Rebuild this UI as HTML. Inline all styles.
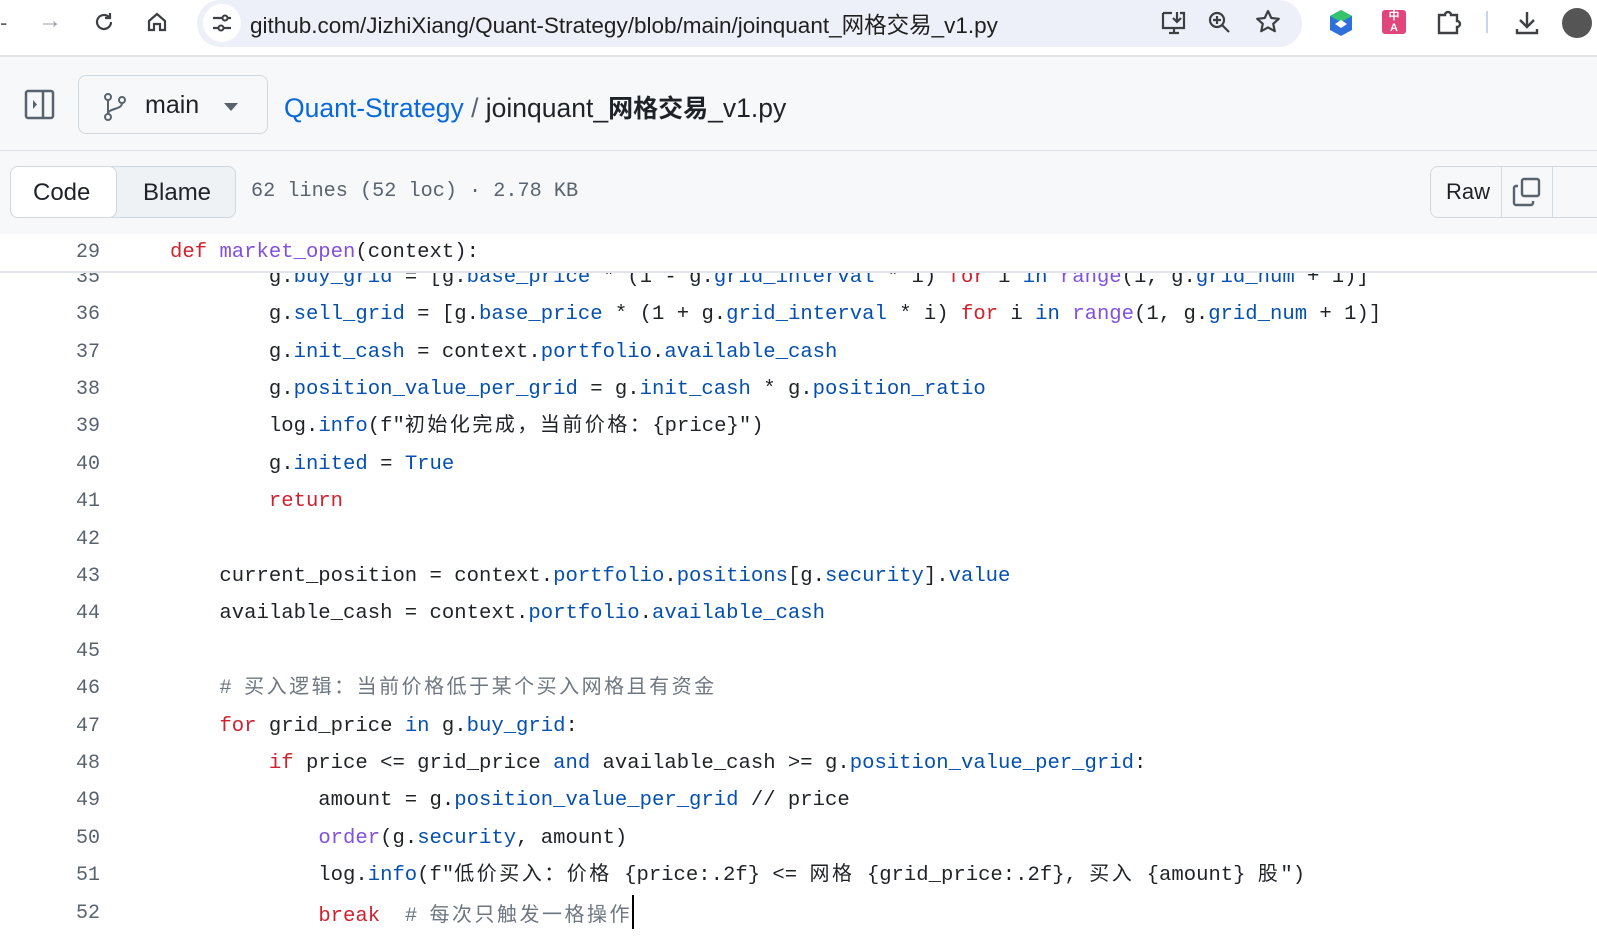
<!DOCTYPE html>
<html><head><meta charset="utf-8"><style>
*{margin:0;padding:0;box-sizing:border-box}
body{width:1597px;height:940px;overflow:hidden;background:#fff;font-family:"Liberation Sans","Noto Sans CJK SC",sans-serif;color:#1f2328;position:relative}
.abs{position:absolute}
.top{left:0;top:0;width:1597px;height:57px;background:#fff;border-bottom:2px solid #e3e3e3}
.url{left:197px;top:0;width:1105px;height:47px;background:#edf0f8;border-radius:24px}
.urltxt{left:250px;top:8px;font-size:22.5px;color:#1f1f1f;white-space:nowrap}
.hdr{left:0;top:57px;width:1597px;height:94px;background:#f6f8fa;border-bottom:1px solid #d8dee4}
.bar{left:0;top:151px;width:1597px;height:83px;background:#f6f8fa}
.btn{border:1px solid #d1d9e0;border-radius:8px;background:#f6f8fa}
.code{font-family:"Liberation Mono","Noto Sans CJK SC",monospace;font-size:20.6px;white-space:pre;color:#1f2328}
.ln{position:absolute;left:40px;width:60px;text-align:right;color:#59636e;font-family:"Liberation Mono",monospace;font-size:20px;line-height:37.4px;height:37.4px}
.l{position:absolute;left:170px;line-height:37.4px;height:37.4px}
.k{color:#cf222e}.f{color:#8250df}.a{color:#0550ae}.c{color:#6e7781}
.z{font-family:"Noto Sans CJK SC",sans-serif;font-size:20px;letter-spacing:2.5px;line-height:1}
</style></head><body>
<div class="abs top"></div>
<div class="abs" style="left:0;top:10px;font-size:22px;color:#5f6368">-</div>
<div class="abs" style="left:38px;top:7px;font-size:24px;color:#9aa0a6">→</div>
<svg class="abs" style="left:92px;top:10px" width="24" height="24" viewBox="0 0 24 24"><path d="M19 12a7 7 0 1 1-2.1-5" fill="none" stroke="#3c4043" stroke-width="2.2"/><path d="M18 3v5h-5" fill="none" stroke="#3c4043" stroke-width="2.2"/></svg>
<svg class="abs" style="left:145px;top:10px" width="24" height="24" viewBox="0 0 24 24"><path d="M4 11l8-7 8 7v9h-5v-6h-6v6H4z" fill="none" stroke="#3c4043" stroke-width="2.2"/></svg>
<div class="abs url"></div>
<div class="abs" style="left:203px;top:4px;width:38px;height:38px;background:#fff;border-radius:50%"></div>
<svg class="abs" style="left:210px;top:12px" width="24" height="22" viewBox="0 0 24 22"><path d="M3 6h10M3 16h6M17 6h4M13 16h8" stroke="#3c4043" stroke-width="2.2"/><circle cx="15" cy="6" r="2.5" fill="none" stroke="#3c4043" stroke-width="2"/><circle cx="11" cy="16" r="2.5" fill="none" stroke="#3c4043" stroke-width="2"/></svg>
<div class="abs urltxt">github.com/JizhiXiang/Quant-Strategy/blob/main/joinquant_网格交易_v1.py</div>
<svg class="abs" style="left:1160px;top:10px" width="28" height="26" viewBox="0 0 28 26"><path d="M3 3h9M20 3h4v15H3V3M9 23h10M14 18v5M17 2v9M13 8l4 4 4-4" fill="none" stroke="#3c4043" stroke-width="2.2"/></svg>
<svg class="abs" style="left:1207px;top:10px" width="26" height="26" viewBox="0 0 26 26"><circle cx="10" cy="10" r="7" fill="none" stroke="#3c4043" stroke-width="2.2"/><path d="M15 15l7 7M10 6v8M6 10h8" stroke="#3c4043" stroke-width="2.2"/></svg>
<svg class="abs" style="left:1255px;top:9px" width="26" height="26" viewBox="0 0 26 26"><path d="M13 2l3.3 7 7.5.8-5.6 5 1.6 7.4L13 18.4l-6.8 3.8 1.6-7.4-5.6-5 7.5-.8z" fill="none" stroke="#3c4043" stroke-width="2.2" stroke-linejoin="round"/></svg>
<svg class="abs" style="left:1328px;top:9px" width="26" height="28" viewBox="0 0 26 28"><path d="M13 1l11 6v14l-11 6-11-6V7z" fill="#2f6fdc"/><path d="M13 1l11 6-11 6-11-6z" fill="#35c46b"/><path d="M13 11l6 4-6 4-6-4z" fill="#fff"/></svg>
<div class="abs" style="left:1382px;top:10px;width:24px;height:24px;background:#e0467c;border-radius:3px;color:#fff;font-size:11px;line-height:12px;text-align:center;font-weight:bold">中<br>A</div>
<svg class="abs" style="left:1435px;top:9px" width="28" height="26" viewBox="0 0 28 26"><path d="M4 6h6a3 3 0 0 1 6 0h6v6a3 3 0 0 1 0 6v6H4z" fill="none" stroke="#3c4043" stroke-width="2.4"/></svg>
<div class="abs" style="left:1486px;top:11px;width:2px;height:22px;background:#c6d4ee"></div>
<svg class="abs" style="left:1513px;top:9px" width="28" height="28" viewBox="0 0 28 28"><path d="M14 3v15M7 11l7 7 7-7M4 20v4h20v-4" fill="none" stroke="#3c4043" stroke-width="2.4"/></svg>
<div class="abs" style="left:1562px;top:8px;width:30px;height:30px;border-radius:50%;background:#555"></div>

<div class="abs hdr"></div>
<svg class="abs" style="left:24px;top:89px" width="32" height="32" viewBox="0 0 32 32"><rect x="2" y="2" width="27" height="27" rx="2" fill="none" stroke="#59636e" stroke-width="2.5"/><path d="M19 2v27" stroke="#59636e" stroke-width="2.5"/><path d="M9 11l4 4.5-4 4.5z" fill="#59636e"/></svg>
<div class="abs btn" style="left:78px;top:75px;width:190px;height:59px"></div>
<svg class="abs" style="left:102px;top:92px" width="26" height="30" viewBox="0 0 26 30"><circle cx="6" cy="5" r="3" fill="none" stroke="#59636e" stroke-width="2"/><circle cx="6" cy="25" r="3" fill="none" stroke="#59636e" stroke-width="2"/><circle cx="20" cy="8" r="3" fill="none" stroke="#59636e" stroke-width="2"/><path d="M6 8v14M20 11c0 7-14 5-14 11" fill="none" stroke="#59636e" stroke-width="2"/></svg>
<div class="abs" style="left:145px;top:91px;font-size:25px;color:#1f2328">main</div>
<div class="abs" style="left:224px;top:103px;width:0;height:0;border-left:7px solid transparent;border-right:7px solid transparent;border-top:8px solid #59636e"></div>
<div class="abs" style="left:284px;top:89px;font-size:26.5px;white-space:nowrap"><span style="color:#0969da">Quant-Strategy</span><span style="color:#59636e"> / </span><span>joinquant_<b style="font-family:'Noto Sans CJK SC',sans-serif;font-size:25px">网格交易</b>_v1.py</span></div>

<div class="abs bar"></div>
<div class="abs btn" style="left:10px;top:166px;width:226px;height:52px;background:#eff2f5"></div>
<div class="abs btn" style="left:10px;top:166px;width:107px;height:52px;background:#fff"></div>
<div class="abs" style="left:33px;top:179px;font-size:24px">Code</div>
<div class="abs" style="left:143px;top:179px;font-size:24px;color:#1f2328">Blame</div>
<div class="abs code" style="left:251px;top:180px;color:#59636e;font-size:20.2px">62 lines (52 loc) · 2.78 KB</div>
<div class="abs btn" style="left:1430px;top:166px;width:180px;height:52px"></div>
<div class="abs" style="left:1501px;top:166px;width:1px;height:52px;background:#d1d9e0"></div>
<div class="abs" style="left:1446px;top:179px;font-size:22px">Raw</div>
<svg class="abs" style="left:1512px;top:177px" width="30" height="30" viewBox="0 0 30 30"><rect x="10" y="2" width="17" height="17" rx="2" fill="none" stroke="#59636e" stroke-width="2.4"/><path d="M6 9H4a2 2 0 0 0-2 2v15a2 2 0 0 0 2 2h15a2 2 0 0 0 2-2v-2" fill="none" stroke="#59636e" stroke-width="2.4"/></svg>
<div class="abs" style="left:1552px;top:166px;width:1px;height:52px;background:#d1d9e0"></div>

<div class="code">
<div class="ln" style="top:259px">35</div><div class="l" style="top:259px">        g.<span class="a">buy_grid</span> = [g.<span class="a">base_price</span> * (1 - g.<span class="a">grid_interval</span> * i) <span class="k">for</span> i <span class="a">in</span> <span class="f">range</span>(1, g.<span class="a">grid_num</span> + 1)]</div>
<div class="ln" style="top:296px">36</div><div class="l" style="top:296px">        g.<span class="a">sell_grid</span> = [g.<span class="a">base_price</span> * (1 + g.<span class="a">grid_interval</span> * i) <span class="k">for</span> i <span class="a">in</span> <span class="f">range</span>(1, g.<span class="a">grid_num</span> + 1)]</div>
<div class="ln" style="top:334px">37</div><div class="l" style="top:334px">        g.<span class="a">init_cash</span> = context.<span class="a">portfolio</span>.<span class="a">available_cash</span></div>
<div class="ln" style="top:371px">38</div><div class="l" style="top:371px">        g.<span class="a">position_value_per_grid</span> = g.<span class="a">init_cash</span> * g.<span class="a">position_ratio</span></div>
<div class="ln" style="top:408px">39</div><div class="l" style="top:408px">        log.<span class="a">info</span>(f"<span class="z">初始化完成，当前价格：</span>{price}")</div>
<div class="ln" style="top:446px">40</div><div class="l" style="top:446px">        g.<span class="a">inited</span> = <span class="a">True</span></div>
<div class="ln" style="top:483px">41</div><div class="l" style="top:483px">        <span class="k">return</span></div>
<div class="ln" style="top:521px">42</div>
<div class="ln" style="top:558px">43</div><div class="l" style="top:558px">    current_position = context.<span class="a">portfolio</span>.<span class="a">positions</span>[g.<span class="a">security</span>].<span class="a">value</span></div>
<div class="ln" style="top:595px">44</div><div class="l" style="top:595px">    available_cash = context.<span class="a">portfolio</span>.<span class="a">available_cash</span></div>
<div class="ln" style="top:633px">45</div>
<div class="ln" style="top:670px">46</div><div class="l c" style="top:670px">    # <span class="z">买入逻辑：当前价格低于某个买入网格且有资金</span></div>
<div class="ln" style="top:708px">47</div><div class="l" style="top:708px">    <span class="k">for</span> grid_price <span class="a">in</span> g.<span class="a">buy_grid</span>:</div>
<div class="ln" style="top:745px">48</div><div class="l" style="top:745px">        <span class="k">if</span> price &lt;= grid_price <span class="a">and</span> available_cash &gt;= g.<span class="a">position_value_per_grid</span>:</div>
<div class="ln" style="top:782px">49</div><div class="l" style="top:782px">            amount = g.<span class="a">position_value_per_grid</span> // price</div>
<div class="ln" style="top:820px">50</div><div class="l" style="top:820px">            <span class="f">order</span>(g.<span class="a">security</span>, amount)</div>
<div class="ln" style="top:857px">51</div><div class="l" style="top:857px">            log.<span class="a">info</span>(f"<span class="z">低价买入：价格</span> {price:.2f} &lt;= <span class="z">网格</span> {grid_price:.2f}, <span class="z">买入</span> {amount} <span class="z">股</span>")</div>
<div class="ln" style="top:895px">52</div><div class="l" style="top:895px">            <span class="k">break</span>  <span class="c"># <span class="z">每次只触发一格操作</span></span><span style="display:inline-block;width:2px;height:34px;background:#000;vertical-align:-8px"></span></div>
<div class="abs" style="left:0;top:234px;width:1597px;height:39px;background:#fff;border-bottom:2px solid #e1e4e8"></div>
<div class="ln" style="top:234px">29</div><div class="l" style="top:234px"><span class="k">def</span> <span class="f">market_open</span>(context):</div>
</div>
</body></html>
